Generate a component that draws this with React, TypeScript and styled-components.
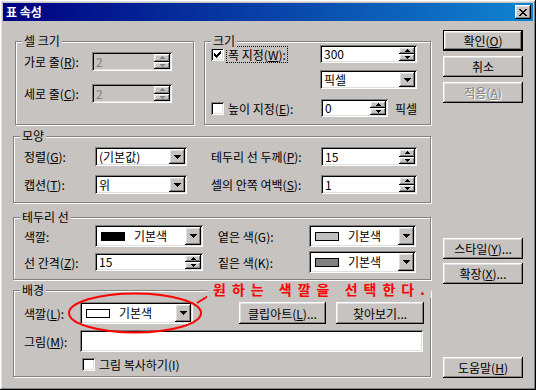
import styled, { createGlobalStyle } from "styled-components";

const GRAY = "#c6c3c1";

const GlobalStyle = createGlobalStyle`
  body {
    margin: 0;
    background: ${GRAY};
    font-family: "Noto Sans CJK KR", "Noto Sans", sans-serif;
    font-size: 12px;
    color: #000;
  }
`;

const raised = `
  box-shadow: inset -1px -1px #000, inset 1px 1px #fff, inset -2px -2px #808080, inset 2px 2px #dfdfdf;
`;
const sunken = `
  box-shadow: inset 1px 1px #808080, inset -1px -1px #fff, inset 2px 2px #000, inset -2px -2px #dfdfdf;
`;

const Window = styled.div`
  position: relative;
  width: 536px;
  height: 390px;
  box-sizing: border-box;
  padding: 3px;
  background: ${GRAY};
  ${raised}
`;

const TitleBar = styled.div`
  height: 18px;
  display: flex;
  align-items: center;
  justify-content: space-between;
  padding: 0 2px 0 3px;
  background: linear-gradient(to right, #000080, #1084d0);
  color: #fff;
  font-weight: bold;
  line-height: 18px;
`;

const CloseBtn = styled.div`
  width: 16px;
  height: 14px;
  background: ${GRAY};
  display: flex;
  align-items: center;
  justify-content: center;
  ${raised}
`;

const Body = styled.div`
  display: flex;
  padding-left: 10px;
`;

const LeftCol = styled.div`
  width: 418px;
  padding-top: 20px;
  display: flex;
  flex-direction: column;
`;

const TopRow = styled.div`
  display: flex;
`;

const RightCol = styled.div`
  width: 80px;
  margin-left: 12px;
  padding-top: 9px;
  display: flex;
  flex-direction: column;
`;

const Group = styled.div<{ $w: number; $h: number; $ml?: number; $mt?: number }>`
  position: relative;
  box-sizing: border-box;
  width: ${(p) => p.$w}px;
  height: ${(p) => p.$h}px;
  margin-left: ${(p) => p.$ml ?? 0}px;
  margin-top: ${(p) => p.$mt ?? 0}px;
  border: 1px solid #808080;
  box-shadow: 1px 1px 0 #fff, inset 1px 1px 0 #fff;
`;

const Legend = styled.span`
  position: absolute;
  top: -9px;
  left: 6px;
  padding: 0 2px;
  background: ${GRAY};
  line-height: 16px;
`;

const FormGrid = styled.div<{ $cols: string; $rows: string; $gap: number; $pad: string }>`
  display: grid;
  grid-template-columns: ${(p) => p.$cols};
  grid-template-rows: ${(p) => p.$rows};
  row-gap: ${(p) => p.$gap}px;
  padding: ${(p) => p.$pad};
  align-items: center;
`;

const Row = styled.div<{ $mt?: number; $h: number; $ml?: number }>`
  display: flex;
  align-items: center;
  height: ${(p) => p.$h}px;
  margin-top: ${(p) => p.$mt ?? 0}px;
  margin-left: ${(p) => p.$ml ?? 0}px;
`;

const Label = styled.span<{ $ml?: number }>`
  white-space: nowrap;
  margin-left: ${(p) => p.$ml ?? 0}px;
`;

const Field = styled.div<{ $w: number; $h: number; $disabled?: boolean; $span?: string }>`
  box-sizing: border-box;
  width: ${(p) => p.$w}px;
  height: ${(p) => p.$h}px;
  padding: 2px;
  display: flex;
  align-items: center;
  background: ${(p) => (p.$disabled ? GRAY : "#fff")};
  color: ${(p) => (p.$disabled ? "#808080" : "#000")};
  grid-column: ${(p) => p.$span ?? "auto"};
  ${sunken}
`;

const FieldText = styled.span`
  flex: 1;
  min-width: 0;
  padding-left: 2px;
  white-space: nowrap;
  line-height: 16px;
`;

const SpinButtons = styled.div`
  width: 16px;
  height: 100%;
  display: flex;
  flex-direction: column;
`;

const SpinBtn = styled.div`
  flex: 1;
  display: flex;
  align-items: center;
  justify-content: center;
  background: ${GRAY};
  ${raised}
`;

const DropBtn = styled.div`
  width: 16px;
  height: 100%;
  display: flex;
  align-items: center;
  justify-content: center;
  background: ${GRAY};
  ${raised}
`;

const Swatch = styled.span<{ $color: string }>`
  width: 22px;
  height: 7px;
  margin: 0 7px 0 4px;
  background: ${(p) => p.$color};
  border: 1px solid #000;
`;

const Button = styled.div<{ $w?: number; $h?: number; $mt?: number; $default?: boolean; $disabled?: boolean }>`
  box-sizing: border-box;
  width: ${(p) => p.$w ?? 80}px;
  height: ${(p) => p.$h ?? 21}px;
  margin-top: ${(p) => p.$mt ?? 0}px;
  display: flex;
  align-items: center;
  justify-content: center;
  background: ${GRAY};
  white-space: nowrap;
  color: ${(p) => (p.$disabled ? "#808080" : "#000")};
  text-shadow: ${(p) => (p.$disabled ? "1px 1px 0 #fff" : "none")};
  border: ${(p) => (p.$default ? "1px solid #000" : "none")};
  ${raised}
`;

const CheckItem = styled.div<{ $w?: number; $ml?: number }>`
  display: flex;
  align-items: center;
  width: ${(p) => (p.$w ? `${p.$w}px` : "auto")};
  margin-left: ${(p) => p.$ml ?? 0}px;
  gap: 3px;
`;

const Box = styled.span`
  box-sizing: border-box;
  width: 13px;
  height: 13px;
  background: #fff;
  display: flex;
  align-items: center;
  justify-content: center;
  ${sunken}
`;

const FocusText = styled.span<{ $focus?: boolean }>`
  padding: 0 1px;
  line-height: 15px;
  outline: ${(p) => (p.$focus ? "1px dotted #000" : "none")};
  white-space: nowrap;
`;

const Annotation = styled.svg`
  position: absolute;
  left: 60px;
  top: 285px;
  pointer-events: none;
`;

const Note = styled.span`
  position: absolute;
  left: 207px;
  top: 281px;
  padding: 0 0 0 6px;
  background: ${GRAY};
  color: #ff0000;
  font-weight: bold;
  font-size: 14px;
  line-height: 17px;
  letter-spacing: 6px;
  white-space: nowrap;
`;

function Arrow({ dir, size = 4, color = "#000" }: { dir: "up" | "down"; size?: number; color?: string }) {
  const w = size * 2 - 1;
  const rows = Array.from({ length: size }, (_, i) => i);
  return (
    <svg width={w} height={size} shapeRendering="crispEdges">
      {rows.map((i) => {
        const len = dir === "down" ? w - i * 2 : 1 + i * 2;
        return <rect key={i} x={(w - len) / 2} y={i} width={len} height={1} fill={color} />;
      })}
    </svg>
  );
}

function CheckMark() {
  const lines = [
    [[6, 1]],
    [[5, 2]],
    [[0, 1], [4, 3]],
    [[0, 2], [3, 3]],
    [[0, 5]],
    [[1, 3]],
    [[2, 1]],
  ];
  return (
    <svg width={7} height={7} shapeRendering="crispEdges">
      {lines.map((segs, y) =>
        segs.map(([x, len], k) => <rect key={`${y}-${k}`} x={x} y={y} width={len} height={1} fill="#000" />)
      )}
    </svg>
  );
}

function Spin({ w, h, value, disabled }: { w: number; h: number; value: string; disabled?: boolean }) {
  const c = disabled ? "#808080" : "#000";
  return (
    <Field $w={w} $h={h} $disabled={disabled}>
      <FieldText>{value}</FieldText>
      <SpinButtons>
        <SpinBtn>
          <Arrow dir="up" size={3} color={c} />
        </SpinBtn>
        <SpinBtn>
          <Arrow dir="down" size={3} color={c} />
        </SpinBtn>
      </SpinButtons>
    </Field>
  );
}

function Combo({ w, h, value, swatch }: { w: number; h: number; value: string; swatch?: string }) {
  return (
    <Field $w={w} $h={h}>
      {swatch && <Swatch $color={swatch} />}
      <FieldText>{value}</FieldText>
      <DropBtn>
        <Arrow dir="down" size={4} />
      </DropBtn>
    </Field>
  );
}

function Check({ checked }: { checked?: boolean }) {
  return <Box>{checked && <CheckMark />}</Box>;
}

export default function App() {
  return (
    <>
      <GlobalStyle />
      <Window>
        <TitleBar>
          <span>표 속성</span>
          <CloseBtn>
            <svg width={8} height={7} shapeRendering="crispEdges">
              <path d="M0 0h2v1h-2zM6 0h2v1h-2zM1 1h2v1h-2zM5 1h2v1h-2zM2 2h4v1h-4zM3 3h2v1h-2zM2 4h4v1h-4zM1 5h2v1h-2zM5 5h2v1h-2zM0 6h2v1h-2zM6 6h2v1h-2z" fill="#000" />
            </svg>
          </CloseBtn>
        </TitleBar>
        <Body>
          <LeftCol>
            <TopRow>
              <Group $w={179} $h={84} $ml={2}>
                <Legend>셀 크기</Legend>
                <FormGrid $cols="68px 80px" $rows="19px 19px" $gap={13} $pad="10px 0 0 8px">
                  <Label>
                    가로 줄(<u>R</u>):
                  </Label>
                  <Spin w={80} h={19} value="2" disabled />
                  <Label>
                    세로 줄(<u>C</u>):
                  </Label>
                  <Spin w={80} h={19} value="2" disabled />
                </FormGrid>
              </Group>
              <Group $w={227} $h={84} $ml={10}>
                <Legend>크기</Legend>
                <Row $h={18} $mt={3}>
                  <CheckItem $w={109} $ml={6}>
                    <Check checked />
                    <FocusText $focus>
                      폭 지정(<u>W</u>):
                    </FocusText>
                  </CheckItem>
                  <Spin w={97} h={18} value="300" />
                </Row>
                <Row $h={19} $mt={7} $ml={115}>
                  <Combo w={97} h={19} value="픽셀" />
                </Row>
                <Row $h={18} $mt={10}>
                  <CheckItem $w={110} $ml={6}>
                    <Check />
                    <FocusText>
                      높이 지정(<u>E</u>):
                    </FocusText>
                  </CheckItem>
                  <Spin w={67} h={18} value="0" />
                  <Label $ml={7}>픽셀</Label>
                </Row>
              </Group>
            </TopRow>

            <Group $w={418} $h={67} $mt={11}>
              <Legend>모양</Legend>
              <FormGrid $cols="71px 116px 110px 96px" $rows="19px 19px" $gap={9} $pad="10px 0 0 10px">
                <Label>
                  정렬(<u>G</u>):
                </Label>
                <Combo w={92} h={19} value="(기본값)" />
                <Label>
                  테두리 선 두께(<u>P</u>):
                </Label>
                <Spin w={96} h={19} value="15" />
                <Label>
                  캡션(<u>T</u>):
                </Label>
                <Combo w={92} h={19} value="위" />
                <Label>
                  셀의 안쪽 여백(<u>S</u>):
                </Label>
                <Spin w={96} h={19} value="1" />
              </FormGrid>
            </Group>

            <Group $w={418} $h={63} $mt={14}>
              <Legend>테두리 선</Legend>
              <FormGrid $cols="71px 123px 91px 107px" $rows="22px 22px" $gap={4} $pad="7px 0 0 10px">
                <Label>색깔:</Label>
                <Combo w={108} h={22} value="기본색" swatch="#000" />
                <Label>옅은 색(G):</Label>
                <Combo w={107} h={22} value="기본색" swatch="#c0c0c0" />
                <Label>
                  선 간격(<u>Z</u>):
                </Label>
                <Spin w={108} h={18} value="15" />
                <Label>짙은 색(K):</Label>
                <Combo w={107} h={22} value="기본색" swatch="#808080" />
              </FormGrid>
            </Group>

            <Group $w={418} $h={87} $mt={10}>
              <Legend>배경</Legend>
              <FormGrid $cols="56px 159px 97px 88px" $rows="22px 22px 13px" $gap={6} $pad="11px 0 0 10px">
                <Label>
                  색깔(<u>L</u>):
                </Label>
                <Combo w={113} h={22} value="기본색" swatch="#fff" />
                <Button $w={87} $h={22}>
                  클립아트(<u>L</u>)...
                </Button>
                <Button $w={88} $h={22}>
                  찾아보기...
                </Button>
                <Label>
                  그림(<u>M</u>):
                </Label>
                <Field $w={343} $h={22} $span="2 / 5" />
                <span />
                <CheckItem $ml={2}>
                  <Check />
                  <FocusText>그림 복사하기(I)</FocusText>
                </CheckItem>
              </FormGrid>
            </Group>
          </LeftCol>

          <RightCol>
            <Button $default>
              확인(<u>O</u>)
            </Button>
            <Button $mt={5}>취소</Button>
            <Button $mt={5} $disabled>
              적용(<u>A</u>)
            </Button>
            <Button $mt={135}>
              스타일(<u>Y</u>)...
            </Button>
            <Button $mt={4}>
              확장(<u>X</u>)...
            </Button>
            <Button $mt={73}>
              도움말(<u>H</u>)
            </Button>
          </RightCol>
        </Body>

        <Annotation width={160} height={55}>
          <ellipse cx={75} cy={28} rx={66} ry={19.5} fill="none" stroke="#ff0000" strokeWidth={2} />
          <line x1={137} y1={18} x2={153} y2={8} stroke="#ff0000" strokeWidth={2} />
        </Annotation>
        <Note>원하는 색깔을 선택한다.</Note>
      </Window>
    </>
  );
}
